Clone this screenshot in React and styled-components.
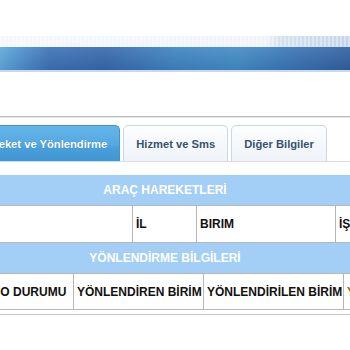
import React from 'react';
import styled, { createGlobalStyle } from 'styled-components';

const GlobalStyle = createGlobalStyle`
  body {
    margin: 0;
    background: #fff;
    font-family: "Liberation Sans", Arial, sans-serif;
    overflow: hidden;
  }
`;

const Page = styled.div`
  width: 350px;
  height: 350px;
  overflow: hidden;
`;

const Banner = styled.div`
  padding-top: 36px;
`;

const BannerTop = styled.div`
  height: 11px;
  background:
    repeating-linear-gradient(90deg, rgba(255, 255, 255, 0.35) 0 2px, transparent 2px 4px),
    linear-gradient(90deg, #f4f8fb 0%, #eef4f9 76%, #d3e0ee 80%, #c4d5e9 100%);
`;

const BlueBar = styled.div`
  height: 23px;
  background:
    linear-gradient(180deg, rgba(255, 255, 255, 0.1), rgba(0, 0, 0, 0.06)),
    linear-gradient(90deg, #5ea7db 0%, #4b8ecc 6%, #3b71b5 14%, #3567ac 30%, #3d82c0 50%, #408ac5 68%, #3875b6 82%, #2f5f9e 100%);
`;

const BannerEdge = styled.div`
  height: 2px;
  background: #ccd8e7;
`;

const Divider = styled.div`
  margin-top: 44px;
  height: 1px;
  background: #bdbdbd;
  border-bottom: 1px solid #e4e4e4;
`;

const TabBar = styled.div`
  margin-top: 7px;
  margin-left: -36px;
  display: flex;
  gap: 3px;
  border-bottom: 1px solid #d3dee9;
`;

const Tab = styled.div`
  height: 36px;
  padding: 0 12px 0 ${(p) => (p.$active ? 15 : 12)}px;
  display: flex;
  align-items: center;
  box-sizing: border-box;
  border-radius: 5px 5px 0 0;
  font-size: 11.2px;
  font-weight: bold;
  white-space: nowrap;
  color: ${(p) => (p.$active ? '#fff' : '#36526f')};
  text-shadow: ${(p) => (p.$active ? '0 0 1px rgba(0, 60, 120, 0.5)' : 'none')};
  border: 1px solid ${(p) => (p.$active ? '#3d94d0' : '#cad8e6')};
  border-bottom: none;
  background: ${(p) =>
    p.$active
      ? 'linear-gradient(180deg, #66b5e9 0%, #53a8e1 55%, #4a9fda 62%, #3f96d3 100%)'
      : 'linear-gradient(180deg, #fcfdfe 0%, #eef4f9 100%)'};
`;

const Table = styled.div`
  margin-top: 13px;
  margin-left: -38px;
  width: 406px;
`;

const SectionHead = styled.div`
  height: 30px;
  display: flex;
  align-items: center;
  justify-content: center;
  background: #a3cef5;
  color: #fff;
  font-size: 12px;
  font-weight: bold;
`;

const Row = styled.div`
  display: grid;
  grid-template-columns: ${(p) => p.$cols};
  height: ${(p) => p.$h}px;
  box-sizing: border-box;
  border-top: 1px solid #b7b7b7;
  border-bottom: 1px solid #b7b7b7;
`;

const Cell = styled.div`
  display: flex;
  align-items: center;
  padding: 0 2px 0 3px;
  border-left: 1px solid #b7b7b7;
  font-size: 12px;
  font-weight: bold;
  white-space: nowrap;
  overflow: hidden;
  color: ${(p) => p.$color || '#111'};
  &:first-child {
    border-left: none;
  }
`;

const FootLine = styled.div`
  margin-top: 4px;
  height: 1px;
  background: #c4c4c4;
`;

export default function App() {
  return (
    <Page>
      <GlobalStyle />
      <Banner>
        <BannerTop />
        <BlueBar />
        <BannerEdge />
      </Banner>
      <Divider />
      <TabBar>
        <Tab $active>Hareket ve Yönlendirme</Tab>
        <Tab>Hizmet ve Sms</Tab>
        <Tab>Diğer Bilgiler</Tab>
      </TabBar>
      <Table>
        <SectionHead>ARAÇ HAREKETLERİ</SectionHead>
        <Row $cols="170px 64px 139px 1fr" $h={38}>
          <Cell />
          <Cell>İL</Cell>
          <Cell>BIRIM</Cell>
          <Cell>İŞLEM</Cell>
        </Row>
        <SectionHead>YÖNLENDİRME BİLGİLERİ</SectionHead>
        <Row $cols="111px 130px 140px 1fr" $h={37}>
          <Cell>KARGO DURUMU</Cell>
          <Cell>YÖNLENDİREN BİRİM</Cell>
          <Cell>YÖNLENDİRİLEN BİRİM</Cell>
          <Cell $color="#8b6914">YÖNLENDİRME TARİHİ</Cell>
        </Row>
        <FootLine />
      </Table>
    </Page>
  );
}
